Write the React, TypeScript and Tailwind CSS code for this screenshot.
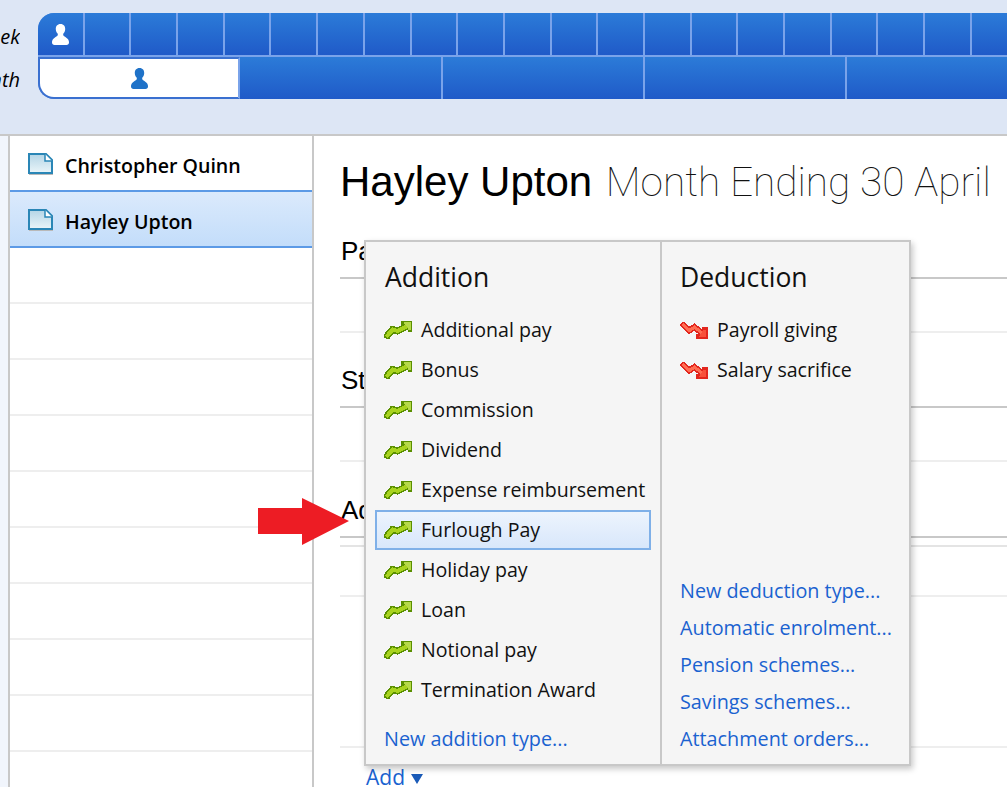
const additions = [
  "Additional pay",
  "Bonus",
  "Commission",
  "Dividend",
  "Expense reimbursement",
  "Furlough Pay",
  "Holiday pay",
  "Loan",
  "Notional pay",
  "Termination Award",
];
const deductions = ["Payroll giving", "Salary sacrifice"];
const deductionLinks = [
  "New deduction type...",
  "Automatic enrolment...",
  "Pension schemes...",
  "Savings schemes...",
  "Attachment orders...",
];
const weeks = Array.from({ length: 22 }, (_, i) => i);
const months = [0, 1, 2, 3, 4];
const emptyRows = [0, 1, 2, 3, 4, 5, 6, 7, 8, 9];

function PersonIcon({ className }: { className: string }) {
  return (
    <svg viewBox="0 0 17 21" className={className} fill="currentColor">
      <path d="M8.500 0C5.300 0 3.600 2.300 3.800 5.200c.1 2 1 3.600 2 4.600v1.500C4.600 12.700 2.600 13.500 1.200 15 .3 16 0 17.300 0 18.500 0 20 1 21 2.500 21h12c1.500 0 2.500-1 2.500-2.500 0-1.200-.3-2.500-1.200-3.500-1.400-1.500-3.400-2.300-4.600-3.700V9.800c1-1 1.900-2.600 2-4.600C13.400 2.300 11.700 0 8.500 0z" />
    </svg>
  );
}

function DocIcon() {
  return (
    <svg viewBox="0 0 26 23" className="w-[26px] h-[23px] shrink-0 mt-[2px]">
      <defs>
        <linearGradient id="docFill" x1="0" y1="0" x2="0" y2="1">
          <stop offset="0" stopColor="#b4d5e6" />
          <stop offset="1" stopColor="#eaf5f9" />
        </linearGradient>
      </defs>
      <path d="M1 21.500h24" stroke="#b9b9b9" strokeWidth="1" />
      <path d="M1 1h17l6 6v13H1z" fill="url(#docFill)" stroke="#2a86b6" strokeWidth="2" />
      <path d="M17 1v7h7" fill="#fff" stroke="#2a86b6" strokeWidth="1.500" />
    </svg>
  );
}

function UpArrow() {
  return (
    <svg viewBox="0 0 28 18" className="w-[28px] h-[18px] shrink-0" shapeRendering="crispEdges">
      <path d="M3.500 14.500l5-6 5 1.500 8-4" fill="none" stroke="#5a8f00" strokeWidth="7" strokeLinecap="square" />
      <path d="M17 0h11v11h-4V8l-3-2-4-2z" fill="#5a8f00" />
      <path d="M3.500 14.500l5-6 5 1.500 8-4" fill="none" stroke="#a9d31f" strokeWidth="4" strokeLinecap="square" />
      <path d="M20 1h7v8h-3V6l-3-2z" fill="#b6d94a" />
    </svg>
  );
}

function DownArrow() {
  return (
    <svg viewBox="0 0 28 17" className="w-[28px] h-[17px] shrink-0" shapeRendering="crispEdges">
      <path d="M3.500 3l6 5.500 5-3.500 6 5" fill="none" stroke="#e3261d" strokeWidth="6" strokeLinecap="square" />
      <path d="M22 5h6v12H16v-5h4z" fill="#e3261d" />
      <path d="M3.500 3l6 5.500 5-3.500 6 5" fill="none" stroke="#ff6d52" strokeWidth="3" strokeLinecap="square" />
      <path d="M23 8h3v7h-7z" fill="#f8503a" />
    </svg>
  );
}

function PopupLink({ label }: { label: string }) {
  return <div className="h-[37px] leading-[37px] text-[19.800px] text-[#1a62d0] whitespace-nowrap">{label}</div>;
}

export default function App() {
  return (
    <div className="relative w-[1007px] h-[787px] overflow-hidden bg-white text-black font-['Open_Sans',sans-serif]">
      {/* Cabecera con semanas y meses */}
      <div className="h-[136px] bg-[#dde6f5] border-b-2 border-[#c8c8c8] pt-[13px] flex">
        <div className="w-[38px] shrink-0 italic text-[20px] text-black">
          <div className="h-[48px] flex items-center justify-end whitespace-nowrap overflow-hidden w-[20px]">Week</div>
          <div className="h-[38px] flex items-center justify-end whitespace-nowrap overflow-hidden w-[20px]">Month</div>
        </div>
        <div className="flex flex-col gap-[2px] h-[86px] shrink-0 bg-[#7aa3ea] rounded-tl-[16px] rounded-bl-[16px]">
          <div className="flex h-[42px]">
            {weeks.map((w) => (
              <div
                key={w}
                className={`w-[46.700px] shrink-0 h-full border-r-2 border-[#7aa3ea] bg-gradient-to-b from-[#2c7bd8] to-[#205ac8] flex items-center justify-center ${
                  w === 0 ? "rounded-tl-[16px]" : ""
                }`}
              >
                {w === 0 && <PersonIcon className="w-[17px] h-[21px] text-white" />}
              </div>
            ))}
          </div>
          <div className="flex h-[42px]">
            {months.map((m) => (
              <div
                key={m}
                className={`w-[202.250px] shrink-0 h-full flex items-center justify-center ${
                  m === 0
                    ? "bg-white border-2 border-[#3a70d0] border-r-[#7aa3ea] rounded-bl-[16px]"
                    : "border-r-2 border-[#7aa3ea] bg-gradient-to-b from-[#2c7bd8] to-[#205ac8]"
                }`}
              >
                {m === 0 && <PersonIcon className="w-[17px] h-[21px] text-[#1f72c8]" />}
              </div>
            ))}
          </div>
        </div>
      </div>

      <div className="flex h-[651px]">
        {/* Lista de empleados */}
        <div className="w-[8px] shrink-0 bg-[#f1f5fc]" />
        <div className="w-[306px] shrink-0 border-x-2 border-[#c8c8c8] text-[19.600px] font-semibold">
          <div className="h-[56px] border-b-2 border-[#5c9ae6] flex items-center pl-[18px] gap-[11px]">
            <DocIcon />
            <span className="mt-[6px]">Christopher Quinn</span>
          </div>
          <div className="h-[56px] border-b-2 border-[#5c9ae6] bg-gradient-to-b from-[#dbeafc] to-[#c3ddfa] flex items-center pl-[18px] gap-[11px]">
            <DocIcon />
            <span className="mt-[6px]">Hayley Upton</span>
          </div>
          {emptyRows.map((r) => (
            <div key={r} className="h-[56px] border-b-2 border-[#eeeeee]" />
          ))}
        </div>

        {/* Contenido principal */}
        <div className="flex-1 pl-[26px] font-['Liberation_Sans',sans-serif]">
          <h1 className="h-[96px] pt-[20px] text-[42px] leading-[52px] whitespace-nowrap">
            <span>Hayley Upton</span>{" "}
            <span className="ml-[2px] text-[40.600px] font-thin text-[#111] font-['Roboto',sans-serif]">Month Ending 30 April</span>
          </h1>
          <div className="h-[47px] pl-[1px] border-b-2 border-[#c8c8c8] text-[26px] leading-[38px]">Pay</div>
          <div className="h-[54px] border-b-2 border-[#eeeeee]" />
          <div className="h-[75px] pl-[1px] border-b-2 border-[#c8c8c8] text-[26px] leading-[94px]">Statutory</div>
          <div className="h-[54px] border-b-2 border-[#eeeeee]" />
          <div className="h-[76px] pl-[1px] border-b-2 border-[#c8c8c8] text-[26px] leading-[96px]">Additions</div>
          <div className="h-[9px] border-b-2 border-[#e4e4e4]" />
          <div className="h-[50px] border-b-2 border-[#eeeeee]" />
          <div className="h-[151px] border-b-2 border-[#eeeeee]" />
          <div className="pl-[26px] text-[21px] leading-[28px] pt-[15px] text-[#1a62d0] font-['Open_Sans',sans-serif] flex items-center gap-[6px] whitespace-nowrap">
            <span>Add</span>
            <svg viewBox="0 0 12 10" className="w-[12px] h-[10px] mt-[3px]" fill="#1a5bb8">
              <path d="M0 0h12L6 10z" />
            </svg>
          </div>
        </div>
      </div>

      {/* Menu desplegable */}
      <div className="absolute left-[364px] top-[240px] w-[547px] h-[526px] flex bg-[#f5f5f5] border-2 border-[#c8c8c8] shadow-[2px_3px_6px_rgba(0,0,0,0.22)] text-[19.600px] text-[#111]">
        <div className="w-[296px] shrink-0 border-r-2 border-[#c8c8c8] flex flex-col">
          <div className="h-[68px] pl-[19px] pt-[17px] text-[26.500px] leading-[36px]">Addition</div>
          {additions.map((a) => (
            <div
              key={a}
              className={`h-10 mx-[9px] pl-[7px] flex items-center gap-[9px] whitespace-nowrap border-2 ${
                a === "Furlough Pay"
                  ? "border-[#7fb0e8] bg-gradient-to-b from-[#edf4fd] to-[#d8e7fb]"
                  : "border-transparent"
              }`}
            >
              <UpArrow />
              <span>{a}</span>
            </div>
          ))}
          <div className="mt-auto pl-[18px] pb-[7px]">
            <PopupLink label="New addition type..." />
          </div>
        </div>
        <div className="flex-1 flex flex-col">
          <div className="h-[68px] pl-[18px] pt-[17px] text-[26.500px] leading-[36px]">Deduction</div>
          {deductions.map((d) => (
            <div key={d} className="h-10 pl-[18px] flex items-center gap-[9px] whitespace-nowrap">
              <DownArrow />
              <span>{d}</span>
            </div>
          ))}
          <div className="mt-auto pl-[18px] pb-[7px]">
            {deductionLinks.map((l) => (
              <PopupLink key={l} label={l} />
            ))}
          </div>
        </div>
      </div>

      {/* Flecha roja */}
      <svg className="absolute left-[258px] top-[498px] w-[91px] h-[47px]" viewBox="0 0 91 47">
        <path d="M0 10h44V0l47 23-47 24V36H0z" fill="#ed1c24" />
      </svg>
    </div>
  );
}
